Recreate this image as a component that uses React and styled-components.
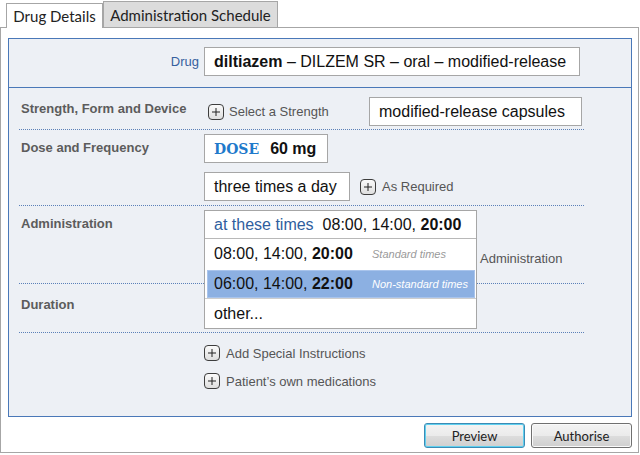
import React from "react";
import styled, { createGlobalStyle } from "styled-components";

const GlobalStyle = createGlobalStyle`
   html, body {
      margin: 0;
      padding: 0;
      background: #fff;
   }
   body {
      font-family: "Liberation Sans", Arial, sans-serif;
   }
`;

const Page = styled("div")`
   width: 640px;
   height: 455px;
   overflow: hidden;
`;

const TabBar = styled("div")`
   height: 27px;
   display: flex;
   align-items: flex-end;
   padding-left: 6px;
   box-sizing: border-box;
`;

const Tab = styled("div")`
   box-sizing: border-box;
   width: ${p => p.$w}px;
   height: ${p => (p.$active ? 25 : 26)}px;
   margin-bottom: ${p => (p.$active ? -1 : 0)}px;
   display: flex;
   align-items: center;
   justify-content: center;
   border: 1px solid #a6a6a6;
   border-bottom: none;
   background: ${p => (p.$active ? "#fff" : "#dcdcdc")};
   position: relative;
   z-index: ${p => (p.$active ? 2 : 0)};
   font-family: Lato, "Open Sans", sans-serif;
   font-size: 15px;
   color: #222;
`;

const Frame = styled("div")`
   box-sizing: border-box;
   width: 639px;
   height: 426px;
   border: 1px solid #a6a6a6;
   padding: 10px 6px 0 7px;
   display: flex;
   flex-direction: column;
`;

const Panel = styled("div")`
   box-sizing: border-box;
   height: 379px;
   border: 1px solid #4a78b8;
   background: #edf0f5;
`;

const DrugRow = styled("div")`
   box-sizing: border-box;
   height: 49px;
   padding-top: 8px;
   display: flex;
   align-items: flex-start;
   border-bottom: 1px solid #4a78b8;
`;

const DrugLabel = styled("div")`
   width: 190px;
   margin-right: 5px;
   text-align: right;
   line-height: 29px;
   font-size: 13px;
   color: #36609e;
`;

const Field = styled("div")`
   box-sizing: border-box;
   width: ${p => p.$w}px;
   height: 29px;
   padding: 0 9px;
   background: #fff;
   border: 1px solid #a6a6a6;
   font-size: 16px;
   line-height: 27px;
   color: #111;
   white-space: nowrap;
`;

const Section = styled("div")`
   display: grid;
   grid-template-columns: 185px 1fr;
   margin: 0 47px 0 10px;
   padding: ${p => p.$pt}px 0 ${p => p.$pb}px;
   border-bottom: ${p => (p.$last ? "none" : "1px dotted #5b80b8")};
`;

const Label = styled("div")`
   padding-left: 2px;
   margin-top: ${p => p.$shift || 0}px;
   line-height: 28px;
   font-size: 13px;
   font-weight: bold;
   color: #5c5c5c;
`;

const Row = styled("div")`
   display: flex;
   align-items: center;
   justify-content: ${p => (p.$spread ? "space-between" : "flex-start")};
   padding-right: ${p => (p.$spread ? 2 : 0)}px;
`;

const Stack = styled("div")`
   display: flex;
   flex-direction: column;
   align-items: flex-start;
   gap: ${p => p.$gap || 0}px;
`;

const LinkRow = styled("div")`
   display: flex;
   align-items: center;
   gap: ${p => p.$gap || 6}px;
   height: 20px;
   margin-left: ${p => p.$indent || 0}px;
   font-size: 13px;
   color: #555;
   white-space: nowrap;
`;

const DoseTag = styled("span")`
   font-family: "DejaVu Serif", "Liberation Serif", serif;
   font-weight: bold;
   font-size: 14px;
   color: #1f7acb;
   margin-right: 11px;
`;

const SelectWrap = styled("div")`
   position: relative;
   width: 273px;
   height: 29px;
`;

const Dropdown = styled("div")`
   position: absolute;
   top: 0;
   left: 0;
   z-index: 5;
   box-sizing: border-box;
   width: 273px;
   border: 1px solid #a6a6a6;
   background: #fff;
`;

const DropHead = styled("div")`
   height: 27px;
   line-height: 27px;
   padding-left: 9px;
   border-bottom: 1px solid #b8b8b8;
   font-size: 16px;
   color: #111;
   white-space: nowrap;
`;

const HeadHint = styled("span")`
   color: #2f5e9e;
   margin-right: 9px;
`;

const Option = styled("div")`
   box-sizing: border-box;
   display: grid;
   grid-template-columns: 158px 1fr;
   align-items: center;
   height: ${p => (p.$active ? 28 : 30)}px;
   margin: ${p => (p.$active ? "1px 1px 0 2px" : "0")};
   padding-left: ${p => (p.$active ? 6 : 9)}px;
   background: ${p => (p.$active ? "#8cb0e2" : "transparent")};
   border: ${p => (p.$active ? "1px solid #a9c4ec" : "none")};
   border-top: ${p =>
      p.$ruled ? "1px solid #cdcdcd" : p.$active ? "1px solid #a9c4ec" : "none"};
   font-size: 16px;
   color: #111;
   white-space: nowrap;
`;

const OptionNote = styled("span")`
   font-size: 11px;
   font-style: italic;
   color: ${p => (p.$light ? "#fff" : "#9a9a9a")};
`;

const AsideText = styled("div")`
   margin: 12px 0 16px 276px;
   line-height: 16px;
   font-size: 13px;
   color: #555;
`;

const Footer = styled("div")`
   display: flex;
   justify-content: flex-end;
   gap: 6px;
   margin-top: 6px;
`;

const Button = styled("button")`
   box-sizing: border-box;
   width: 101px;
   height: 25px;
   padding: 0;
   border: 1px solid ${p => (p.$focus ? "#3c8bb5" : "#707070")};
   border-radius: 3px;
   box-shadow: ${p => (p.$focus ? "inset 0 0 0 1px #5fd0ef" : "inset 0 0 0 1px #fafafa")};
   background: linear-gradient(#f3f3f3 0%, #ebebeb 50%, #dddddd 51%, #cfcfcf 100%);
   font-family: Lato, "Open Sans", sans-serif;
   font-size: 13px;
   color: #222;
`;

const PlusBox = () => (
   <svg width="16" height="16" viewBox="0 0 16 16">
      <defs>
         <linearGradient id="pb" x1="0" y1="0" x2="0" y2="1">
            <stop offset="0" stopColor="#fbfbfb" />
            <stop offset="1" stopColor="#dedede" />
         </linearGradient>
      </defs>
      <rect x="0.5" y="0.5" width="15" height="15" rx="3.5" fill="url(#pb)" stroke="#3d3d3d" />
      <path d="M4 8h8M8 4v8" stroke="#222" strokeWidth="1" />
   </svg>
);

const Times = ({ first, last }) => (
   <span>
      {first}, 14:00, <b>{last}</b>
   </span>
);

const App = () => {
   return (
      <Page>
         <GlobalStyle />
         <TabBar>
            <Tab $active $w={97}>Drug Details</Tab>
            <Tab $w={175}>Administration Schedule</Tab>
         </TabBar>
         <Frame>
            <Panel>
               <DrugRow>
                  <DrugLabel>Drug</DrugLabel>
                  <Field $w={376}>
                     <b>diltiazem</b> – DILZEM SR – oral – modified-release
                  </Field>
               </DrugRow>

               <Section $pt={9} $pb={3}>
                  <Label $shift={-2}>Strength, Form and Device</Label>
                  <Row $spread>
                     <LinkRow $indent={4} $gap={5}>
                        <PlusBox />
                        Select a Strength
                     </LinkRow>
                     <Field $w={213}>modified-release capsules</Field>
                  </Row>
               </Section>

               <Section $pt={4} $pb={4}>
                  <Label>Dose and Frequency</Label>
                  <Stack $gap={9}>
                     <Field $w={124}>
                        <DoseTag>DOSE</DoseTag>
                        <b>60 mg</b>
                     </Field>
                     <Row>
                        <Field $w={146}>three times a day</Field>
                        <LinkRow $indent={10}>
                           <PlusBox />
                           As Required
                        </LinkRow>
                     </Row>
                  </Stack>
               </Section>

               <Section $pt={4} $pb={0}>
                  <Label>Administration</Label>
                  <div>
                     <SelectWrap>
                        <Dropdown>
                           <DropHead>
                              <HeadHint>at these times</HeadHint>
                              <Times first="08:00" last="20:00" />
                           </DropHead>
                           <Option>
                              <Times first="08:00" last="20:00" />
                              <OptionNote>Standard times</OptionNote>
                           </Option>
                           <Option $active>
                              <Times first="06:00" last="22:00" />
                              <OptionNote $light>Non-standard times</OptionNote>
                           </Option>
                           <Option $ruled>
                              <span>other...</span>
                           </Option>
                        </Dropdown>
                     </SelectWrap>
                     <AsideText>Administration</AsideText>
                  </div>
               </Section>

               <Section $pt={7} $pb={13}>
                  <Label>Duration</Label>
                  <div />
               </Section>

               <Section $pt={10} $pb={0} $last>
                  <div />
                  <Stack $gap={8}>
                     <LinkRow>
                        <PlusBox />
                        Add Special Instructions
                     </LinkRow>
                     <LinkRow>
                        <PlusBox />
                        Patient’s own medications
                     </LinkRow>
                  </Stack>
               </Section>
            </Panel>
            <Footer>
               <Button $focus>Preview</Button>
               <Button>Authorise</Button>
            </Footer>
         </Frame>
      </Page>
   );
};

export default App;
